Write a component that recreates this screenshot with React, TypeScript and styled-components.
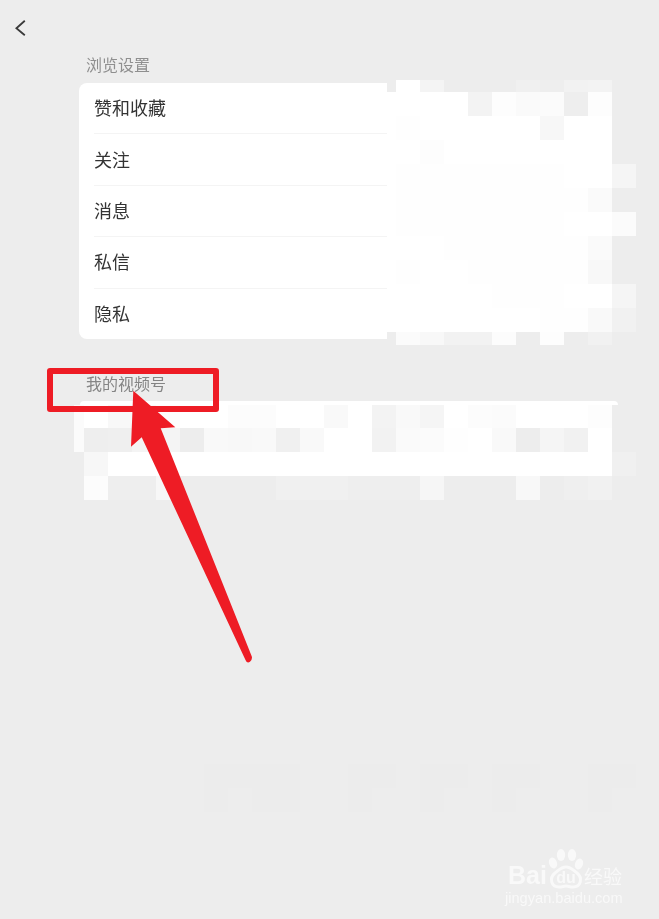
import styled, { createGlobalStyle } from "styled-components";

const GlobalStyle = createGlobalStyle`
  html, body {
    margin: 0;
    padding: 0;
    background: #ededed;
  }
`;

const Page = styled.div`
  position: relative;
  width: 659px;
  height: 919px;
  overflow: hidden;
  background: #ededed;
  font-family: "Noto Sans CJK SC", "Liberation Sans", sans-serif;
`;

const Header = styled.div`
  height: 54px;
  padding-left: 14px;
  box-sizing: border-box;
  padding-top: 18px;
`;

const SectionTitle = styled.div<{ $top: number; $bottom: number; $color: string }>`
  box-sizing: border-box;
  padding: ${(p) => p.$top}px 0 ${(p) => p.$bottom}px 86px;
  line-height: 20px;
  font-size: 16px;
  color: ${(p) => p.$color};
  filter: blur(0.3px);
`;

const SettingsRow = styled.div`
  display: flex;
  align-items: flex-start;
  margin-left: 79px;
  margin-top: 7px;
`;

const Card = styled.div`
  display: flex;
  flex-direction: column;
  width: 308px;
  height: 256px;
  background: #fff;
  border-radius: 8px 0 0 8px;
`;

const Item = styled.div`
  flex: 1;
  display: flex;
  align-items: center;
  box-sizing: border-box;
  padding-bottom: 2px;
  margin-left: 15px;
  font-size: 18px;
  color: #333;
  border-bottom: 1px solid #f4f4f4;
  &:last-child {
    border-bottom: none;
  }
  & > span {
    filter: blur(0.3px);
  }
`;

const SideMosaic = styled.div`
  display: grid;
  grid-template-columns: 9px repeat(10, 24px);
  grid-template-rows: 12px repeat(10, 24px) 13px;
  margin-top: -3px;
`;

const ChannelBar = styled.div`
  width: 538px;
  height: 4px;
  margin-left: 80px;
  background: #fff;
  border-radius: 8px 8px 0 0;
`;

const ChannelMosaic = styled.div`
  display: grid;
  grid-template-columns: 10px repeat(23, 24px);
  grid-template-rows: 23px repeat(3, 24px);
  margin-left: 74px;
`;

const GhostMosaic = styled.div`
  display: grid;
  grid-template-columns: repeat(18, 24px);
  grid-template-rows: repeat(2, 24px);
  margin-left: 204px;
  margin-top: 264px;
`;

const Cell = styled.div<{ $shade: string }>`
  background: #${(p) => p.$shade.repeat(3)};
`;

const RedBox = styled.div`
  position: absolute;
  left: 47px;
  top: 368px;
  width: 172px;
  height: 44px;
  box-sizing: border-box;
  border: 6px solid #ee1c25;
  border-radius: 3px;
`;

const ArrowSvg = styled.svg`
  position: absolute;
  left: 125px;
  top: 385px;
`;

const Watermark = styled.div`
  position: absolute;
  left: 505px;
  top: 848px;
  width: 122px;
  color: rgba(255, 255, 255, 0.65);
  font-family: "Liberation Sans", sans-serif;
  filter: blur(0.4px);
`;

const BrandLine = styled.div`
  display: flex;
  align-items: flex-end;
  height: 42px;
`;

const BrandLatin = styled.span`
  font-size: 25px;
  font-weight: 700;
  line-height: 25px;
  margin-left: 3px;
  margin-bottom: 2px;
`;

const BrandCjk = styled.span`
  font-family: "Noto Sans CJK SC", sans-serif;
  font-size: 19px;
  line-height: 22px;
  margin-bottom: 3px;
  margin-left: -1px;
  white-space: nowrap;
`;

const BrandUrl = styled.div`
  font-size: 14.6px;
  line-height: 14px;
  margin-top: 1px;
  white-space: nowrap;
`;

const items = ["赞和收藏", "关注", "消息", "私信", "隐私"];

// mosaic shades, read off the blurred part row by row
const sideCells = [
  "ed ff f4 ed ed ed f0 ee f2 f3 ed",
  "ff ff ff ff f3 fd fa fb ee fd ed",
  "ff fe ff ff ff ff ff f7 ff ff ed",
  "ff ff fd ff ff ff ff ff ff ff ed",
  "ff fe fe fe fe fe fe fe ff ff f5",
  "ff fe fe fe fe fe fe fe fe fa ed",
  "ff fe fe fe fe fe fe fe ff ff fb",
  "ff ff ff fe fe fe fe fe fe fa ed",
  "ff fe ff ff fe fe fe fe fe f8 ed",
  "ff ff ff ff ff fe fe fe ff ff f5",
  "ff ff ff ff ff ff ff fe fe f9 f1",
  "ed fb f8 f2 f2 fc ed fd ed f1 ed",
];

const channelCells = [
  "fb ff f8 f8 fd ff ff fc fc ff ff f9 ff f3 f9 f5 ff fc fb ff ff ff fd ed",
  "fb ee ef f4 f4 ed f9 f8 f9 f0 f9 ff ff f2 fa fb fe ff f9 ed f5 f1 ff ed",
  "ed f7 ff ff ff ff ff ff ff ff ff ff ff ff ff ff ff ff ff ff ff ff ff f0",
  "ed fc ee ee f7 ed ed ed ed f0 f0 f0 ee ee ee f6 ed ed ed f8 ed ef f1 ed",
];

const ghostCells = [
  "ec ec ec ec ed ed ec ec ed ec ec ed ec ec ed ed ec ec",
  "ec ed ec ec ed ed ec ed ed ec ed ed ec ed ed ed ec ed",
];

const toCells = (rows: string[]) => rows.flatMap((r) => r.split(" "));

function App() {
  return (
    <Page>
      <GlobalStyle />
      <Header>
        <svg width="14" height="18" viewBox="0 0 14 18" fill="none">
          <path d="M10.8 1.8 2.4 9.2l8.4 7" stroke="#3a3a3a" strokeWidth="1.8" />
        </svg>
      </Header>
      <SectionTitle $top={0} $bottom={2} $color="#8f8f8f">
        浏览设置
      </SectionTitle>
      <SettingsRow>
        <Card>
          {items.map((t) => (
            <Item key={t}>
              <span>{t}</span>
            </Item>
          ))}
        </Card>
        <SideMosaic>
          {toCells(sideCells).map((s, i) => (
            <Cell key={i} $shade={s} />
          ))}
        </SideMosaic>
      </SettingsRow>
      <SectionTitle $top={28} $bottom={8} $color="#858585">
        我的视频号
      </SectionTitle>
      <ChannelBar />
      <ChannelMosaic>
        {toCells(channelCells).map((s, i) => (
          <Cell key={i} $shade={s} />
        ))}
      </ChannelMosaic>
      <GhostMosaic>
        {toCells(ghostCells).map((s, i) => (
          <Cell key={i} $shade={s} />
        ))}
      </GhostMosaic>

      <RedBox />
      <ArrowSvg width="132" height="285" viewBox="125 385 132 285">
        <path
          d="M133.3 390.7 175.3 427.3 160.7 428.3 251.8 656.5Q252.6 659.5 250 661.8 247 663.6 245.6 660.2L141.7 437.3 131 446.7Z"
          fill="#ee1c25"
        />
      </ArrowSvg>

      <Watermark>
        <BrandLine>
          <BrandLatin>Bai</BrandLatin>
          <svg width="38" height="42" viewBox="0 0 38 42">
            <g fill="rgba(255,255,255,0.65)">
              <ellipse cx="6" cy="15" rx="4" ry="5.6" transform="rotate(-20 6 15)" />
              <ellipse cx="14" cy="7" rx="4.2" ry="6" />
              <ellipse cx="25" cy="7" rx="4.2" ry="6" />
              <ellipse cx="32" cy="16" rx="4" ry="5.6" transform="rotate(20 32 16)" />
            </g>
            <path
              d="M19 19c5 0 7 3 11 6 6 5 4 14-4 14-3 0-5-1-7-1s-4 1-7 1c-8 0-10-9-4-14 4-3 6-6 11-6Z"
              fill="none"
              stroke="rgba(255,255,255,0.65)"
              strokeWidth="3"
            />
            <text
              x="19"
              y="35"
              textAnchor="middle"
              fontFamily="Liberation Sans, sans-serif"
              fontWeight="700"
              fontSize="16"
              fill="rgba(255,255,255,0.65)"
            >
              du
            </text>
          </svg>
          <BrandCjk>经验</BrandCjk>
        </BrandLine>
        <BrandUrl>jingyan.baidu.com</BrandUrl>
      </Watermark>
    </Page>
  );
}

export default App;
